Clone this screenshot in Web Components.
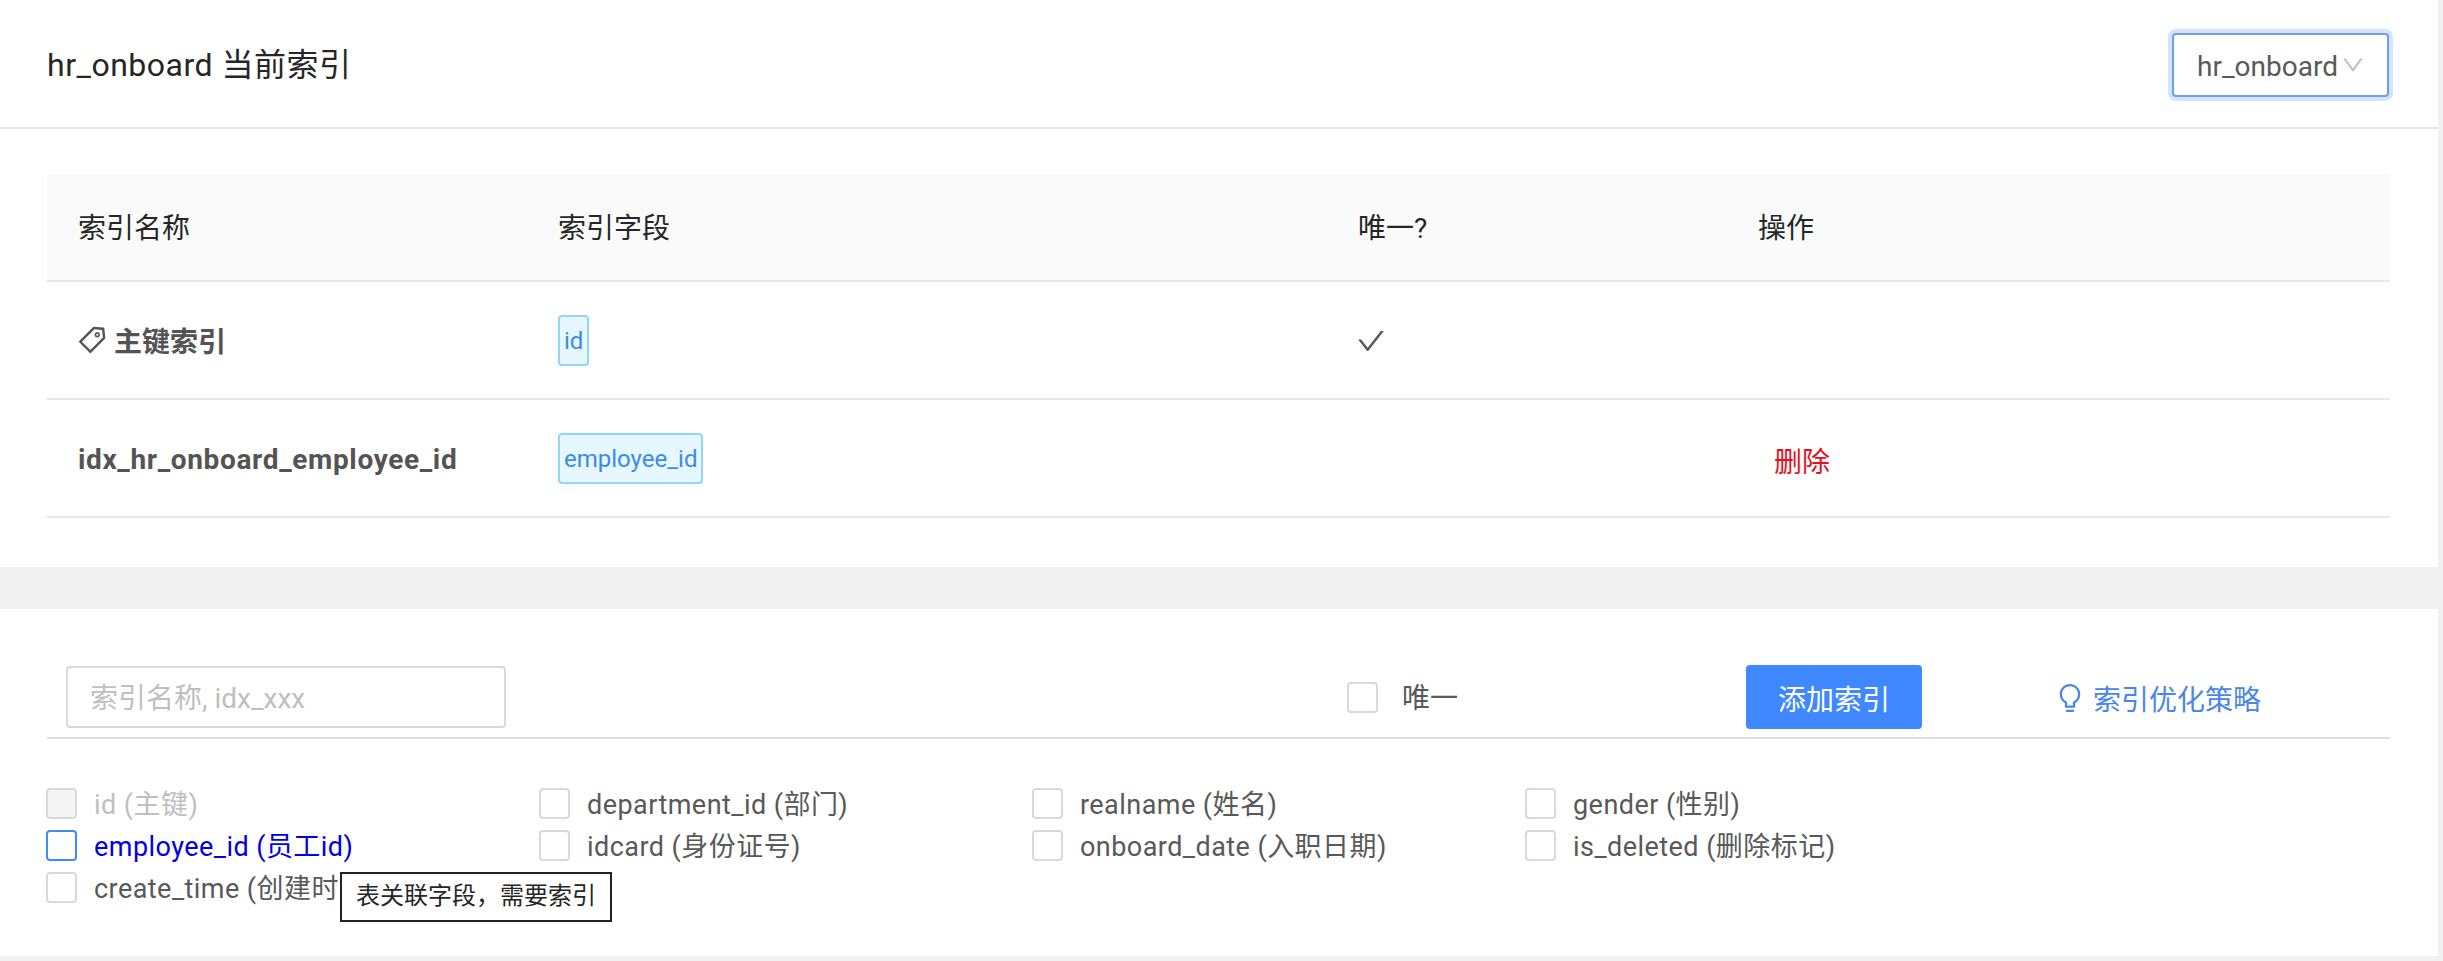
<!DOCTYPE html>
<html lang="zh">
<head>
<meta charset="utf-8">
<title>hr_onboard 当前索引</title>
<style>
  html, body { margin: 0; height: 961px; overflow: hidden; background: #f0f0f0; }
  body { font-family: Roboto, "Noto Sans CJK SC", sans-serif; font-size: 28px; color: #595959; }
  index-card { margin-bottom: 42px; }
</style>
</head>
<body>
<script>
const ICONS = {
  check: "M912 190h-69.9c-9.8 0-19.1 4.5-25.1 12.2L404.7 724.5 207 474a32 32 0 0 0-25.1-12.2H112c-6.7 0-10.4 7.7-6.3 12.9l273.9 347c12.8 16.2 37.4 16.2 50.3 0l488.4-618.9c4.1-5.1.4-12.8-6.3-12.8z",
  down: "M884 256h-75c-5.1 0-9.9 2.5-12.9 6.6L512 654.2 227.9 262.6c-3-4.1-7.8-6.6-12.9-6.6h-75c-6.5 0-10.3 7.4-6.5 12.7l352.6 486.1c12.8 17.6 39 17.6 51.7 0l352.6-486.1c3.9-5.3.1-12.7-6.4-12.7z",
  tag: "M938 458.8l-29.6-312.6c-1.5-16.2-14.4-29-30.6-30.6L565.2 86h-.4c-3.2 0-5.7 1-7.6 2.9L88.9 557.2a9.96 9.96 0 0 0 0 14.1l363.8 363.8c1.9 1.9 4.4 2.9 7.1 2.9s5.2-1 7.1-2.9l468.3-468.3c2-2.1 3-5 2.8-8zM459.7 834.7L189.3 564.3 589 164.6 836 188l23.4 247-399.7 399.7zM680 256c-48.5 0-88 39.5-88 88s39.5 88 88 88 88-39.5 88-88-39.5-88-88-88zm0 120c-17.7 0-32-14.3-32-32s14.3-32 32-32 32 14.3 32 32-14.3 32-32 32z",
  bulb: "M632 888H392c-4.4 0-8 3.6-8 8v32c0 17.7 14.3 32 32 32h192c17.7 0 32-14.3 32-32v-32c0-4.4-3.6-8-8-8zM512 64c-181.1 0-328 146.9-328 328 0 121.4 66 227.4 164 284.1V792c0 17.7 14.3 32 32 32h264c17.7 0 32-14.3 32-32V676.1c98-56.7 164-162.7 164-284.1 0-181.1-146.9-328-328-328zm127.9 549.8L604 634.6V752H420V634.6l-35.9-20.8C305.4 568.3 256 484.5 256 392c0-141.4 114.6-256 256-256s256 114.6 256 256c0 92.5-49.4 176.3-128.1 221.8z"
};

function define(name, html, setup) {
  const $template = document.createElement("template");
  $template.innerHTML = html;
  customElements.define(name, class extends HTMLElement {
    constructor() {
      super();
      this.attachShadow({ mode: "open" });
      this.shadowRoot.appendChild($template.content.cloneNode(true));
      if (setup) setup(this, this.shadowRoot);
    }
  });
}

define("ant-icon", `
  <style>
    :host { display: inline-flex; width: var(--size, 32px); height: var(--size, 32px); flex: none; }
    svg { width: 100%; height: 100%; fill: currentColor; display: block; }
  </style>
  <svg viewBox="0 0 1024 1024"><path></path></svg>
`, (el, root) => root.querySelector("path").setAttribute("d", ICONS[el.getAttribute("name")]));

define("index-card", `
  <style>
    :host { display: flow-root; width: 2438px; background: #fff; box-sizing: border-box; }
  </style>
  <slot></slot>
`);

define("index-header", `
  <style>
    :host { display: flex; align-items: center; justify-content: space-between; height: 129px; box-sizing: border-box;
      padding: 3px 49px 0 47px; border-bottom: 2px solid #e8e8e8; }
    h2 { margin: 0; font-size: 32px; font-weight: 400; color: #262626; line-height: 1; letter-spacing: .5px; }
  </style>
  <h2><slot></slot></h2>
  <slot name="extra"></slot>
`);

define("table-select", `
  <style>
    :host { display: flex; align-items: center; width: 217px; height: 64px; box-sizing: border-box; padding: 0 21px 0 23px;
      border: 2px solid #6f9fe6; border-radius: 4px; box-shadow: 0 0 0 4px #d3e4ff; background: #fff; color: #595959; font-size: 28px; }
    span { flex: 1; white-space: nowrap; padding-top: 3px; }
    ant-icon { --size: 26px; color: #bfbfbf; }
  </style>
  <span><slot></slot></span><ant-icon name="down"></ant-icon>
`);

define("index-table", `
  <style>
    :host { display: block; padding: 45px 48px 49px 47px; }
  </style>
  <slot></slot>
`);

define("index-row", `
  <style>
    :host { display: grid; grid-template-columns: 480px 800px 400px 1fr; align-items: center; box-sizing: border-box;
      height: 118px; border-bottom: 2px solid #e8e8e8; font-size: 28px; color: #595959; }
    :host([head]) { height: 108px; background: #fafafa; color: #262626; padding-bottom: 2px; }
    ::slotted(*) { padding-left: 31px; }
  </style>
  <slot></slot>
`);

define("table-cell", `
  <style>
    :host { display: flex; align-items: center; gap: 6px; white-space: nowrap; }
    :host([strong]) { font-weight: 700; color: #545454; }
    :host([latin]) { letter-spacing: .65px; padding-top: 3px; }
    ::slotted(ant-icon[name="tag"]) { margin-left: -2px; }
    ::slotted(ant-icon[name="check"]) { margin-top: 2px; margin-left: -3px; }
  </style>
  <slot></slot>
`);

define("field-tag", `
  <style>
    :host { display: inline-block; box-sizing: border-box; height: 51px; line-height: 49px; padding: 0 4px; font-size: 24px;
      border: 2px solid #91d5ff; border-radius: 4px; background: #e6f7ff; color: #3b8beb; white-space: nowrap; }
  </style>
  <slot></slot>
`);

define("danger-link", `
  <style>
    :host { display: inline-block; color: #e60f1e; padding: 3px 0 0 16px; }
  </style>
  <slot></slot>
`);

define("name-input", `
  <style>
    :host { display: block; width: 440px; height: 62px; box-sizing: border-box; margin-left: 19px; padding: 0 22px; line-height: 62px;
      border: 2px solid #d9d9d9; border-radius: 4px; color: #bfbfbf; font-size: 28px; white-space: nowrap; }
  </style>
  <slot></slot>
`);

define("check-box", `
  <style>
    :host { display: flex; align-items: center; gap: 17px; height: 31px; white-space: nowrap; font-size: 27px; letter-spacing: .45px; color: #595959; position: relative; }
    i { display: block; flex: none; width: 31px; height: 31px; box-sizing: border-box; border: 2px solid #d9d9d9; border-radius: 4px; background: #fff; }
    span { position: relative; top: -1px; }
    :host([disabled]) { color: #bfbfbf; }
    :host([disabled]) i { background: #f5f5f5; }
    :host([active]) { color: #0000e0; }
    :host([active]) i { border-color: #4088ff; }
  </style>
  <i></i><span><slot></slot></span><slot name="tip"></slot>
`);

define("add-button", `
  <style>
    :host { display: inline-flex; align-items: center; justify-content: center; width: 176px; height: 64px; box-sizing: border-box; padding-top: 2px;
      background: #4088ff; color: #fff; border-radius: 4px; font-size: 28px; }
  </style>
  <slot></slot>
`);

define("tip-link", `
  <style>
    :host { display: inline-flex; align-items: center; gap: 7px; color: #4a86e8; font-size: 28px; white-space: nowrap; padding-top: 2px; }
  </style>
  <ant-icon name="bulb"></ant-icon><slot></slot>
`);

define("index-toolbar", `
  <style>
    :host { display: grid; grid-template-columns: 1300px 399px 308px 1fr; align-items: center; box-sizing: border-box;
      margin: 56px 48px 0 47px; height: 74px; padding-bottom: 10px; border-bottom: 2px solid #e0e0e0; }
  </style>
  <slot></slot>
`);

define("field-grid", `
  <style>
    :host { display: grid; grid-template-columns: repeat(4, 493px); row-gap: 11px; padding: 49px 0 53px 46px; }
  </style>
  <slot></slot>
`);

define("hover-tip", `
  <style>
    :host { position: absolute; left: 294px; top: 42px; z-index: 2; padding: 0 14px; height: 50px; line-height: 44px; box-sizing: border-box;
      border: 2px solid #222; background: #fff; color: #262626; font-size: 24px; letter-spacing: 0; white-space: nowrap; }
  </style>
  <slot></slot>
`);

document.body.innerHTML = `
  <index-card>
    <index-header>hr_onboard 当前索引<table-select slot="extra">hr_onboard</table-select></index-header>
    <index-table>
      <index-row head>
        <table-cell>索引名称</table-cell><table-cell>索引字段</table-cell><table-cell>唯一?</table-cell><table-cell>操作</table-cell>
      </index-row>
      <index-row>
        <table-cell strong><ant-icon name="tag"></ant-icon>主键索引</table-cell>
        <table-cell><field-tag>id</field-tag></table-cell>
        <table-cell><ant-icon name="check"></ant-icon></table-cell>
        <table-cell></table-cell>
      </index-row>
      <index-row>
        <table-cell strong latin>idx_hr_onboard_employee_id</table-cell>
        <table-cell><field-tag>employee_id</field-tag></table-cell>
        <table-cell></table-cell>
        <table-cell><danger-link>删除</danger-link></table-cell>
      </index-row>
    </index-table>
  </index-card>
  <index-card>
    <index-toolbar>
      <name-input>索引名称, idx_xxx</name-input>
      <check-box style="font-size:28px;gap:24px;letter-spacing:0">唯一</check-box>
      <div><add-button>添加索引</add-button></div>
      <tip-link>索引优化策略</tip-link>
    </index-toolbar>
    <field-grid>
      <check-box disabled>id (主键)</check-box>
      <check-box>department_id (部门)</check-box>
      <check-box>realname (姓名)</check-box>
      <check-box>gender (性别)</check-box>
      <check-box active>employee_id (员工id)<hover-tip slot="tip">表关联字段，需要索引</hover-tip></check-box>
      <check-box>idcard (身份证号)</check-box>
      <check-box>onboard_date (入职日期)</check-box>
      <check-box>is_deleted (删除标记)</check-box>
      <check-box>create_time (创建时间)</check-box>
    </field-grid>
  </index-card>
`;
</script>
</body>
</html>
